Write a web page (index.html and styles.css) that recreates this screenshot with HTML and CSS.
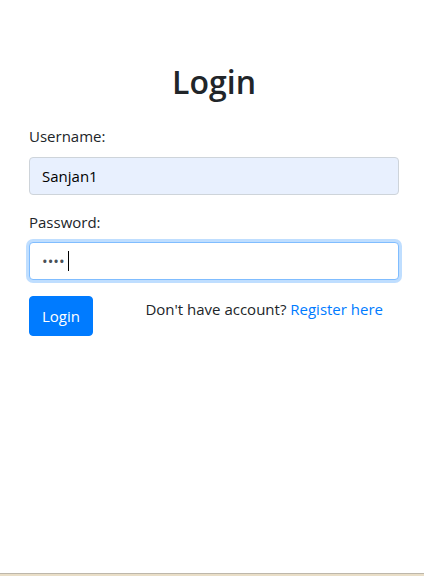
FILE: index.html
```html
<!DOCTYPE html>
<html lang="en">
<head>
<meta charset="utf-8">
<title>Login</title>
<link rel="stylesheet" href="styles.css">
</head>
<body>
<div class="page">
  <main class="container">
    <h2 class="title">Login</h2>
    <form class="form">
      <div class="form-group">
        <label class="label" for="username">Username:</label>
        <input class="input input-autofill" id="username" type="text" value="Sanjan1">
      </div>
      <div class="form-group">
        <label class="label" for="password">Password:</label>
        <div class="input-wrap">
          <input class="input input-focus" id="password" type="password" value="abcd">
          <span class="caret"></span>
        </div>
      </div>
      <div class="actions">
        <button class="btn" type="button">Login</button>
        <p class="register">Don't have account? <a class="link" href="#">Register here</a></p>
      </div>
    </form>
  </main>
  <div class="taskbar"></div>
</div>
</body>
</html>
```
FILE: styles.css
```css
* { box-sizing: border-box; }
html, body { margin: 0; padding: 0; height: 100%; }
body {
  font-family: "Open Sans", "Noto Sans", Arial, sans-serif;
  font-size: 16px;
  line-height: 1.5;
  color: #212529;
  background: #fff;
}
.page {
  min-height: 100vh;
  display: flex;
  flex-direction: column;
}
.container {
  flex: 1;
  padding: 63px 25px 0 29px;
}
.title {
  margin: 0 0 24px;
  text-align: center;
  font-size: 32px;
  line-height: 1.2;
  font-weight: 600;
}
.form { margin: 0; }
.form-group { margin-bottom: 16px; }
.label {
  display: block;
  margin-bottom: 9px;
  font-size: 15px;
}
.input-wrap { position: relative; }
.input {
  display: block;
  width: 100%;
  height: 38px;
  padding: 6px 12px;
  font-family: inherit;
  font-size: 15px;
  line-height: 1.5;
  color: #495057;
  background: #fff;
  border: 1px solid #ced4da;
  border-radius: 4px;
  outline: none;
}
.input-autofill {
  background: #e8f0fe;
  color: #000;
}
.input-focus {
  border-color: #80bdff;
  box-shadow: 0 0 0 3px rgba(0, 123, 255, 0.25);
}
.caret {
  position: absolute;
  left: 39px;
  top: 9px;
  width: 1px;
  height: 20px;
  background: #000;
}
.actions {
  display: flex;
  align-items: flex-start;
  justify-content: space-between;
}
.btn {
  height: 40px;
  padding: 6px 12px;
  font-family: inherit;
  font-size: 15px;
  line-height: 1.5;
  color: #fff;
  background: #007bff;
  border: 1px solid #007bff;
  border-radius: 4px;
}
.register {
  margin: 0 16px 0 0;
  font-size: 15px;
  line-height: 24px;
  padding-top: 1px;
}
.link {
  color: #007bff;
  text-decoration: none;
}
.taskbar {
  height: 3px;
  border-top: 1px solid #bdb7ab;
  background: #e9dec7;
}
```
